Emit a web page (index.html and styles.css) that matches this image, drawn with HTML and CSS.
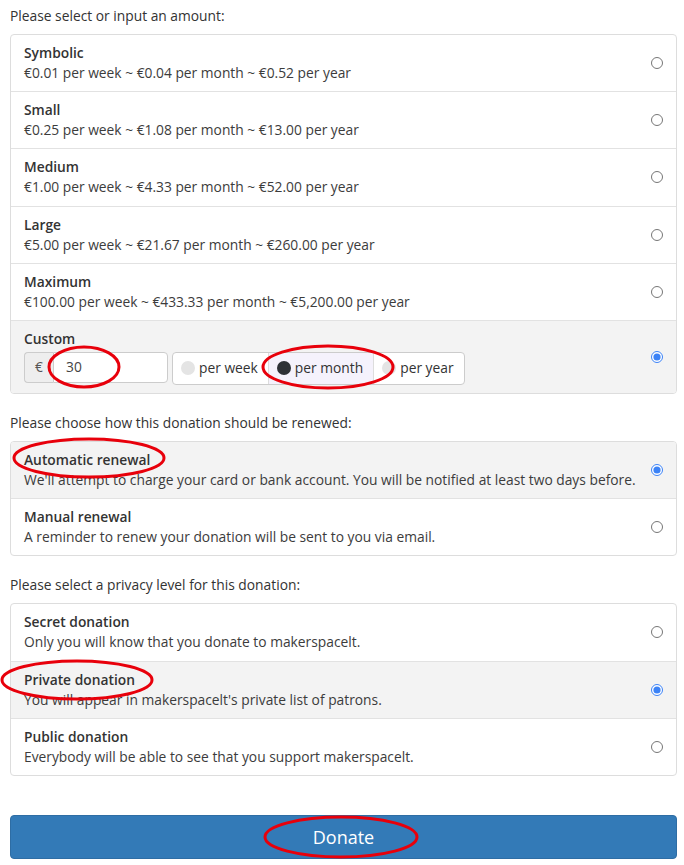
FILE: index.html
```html
<!DOCTYPE html>
<html>
<head>
<meta charset="utf-8">
<link rel="stylesheet" href="styles.css">
</head>
<body>
<div class="page">
  <p class="label first">Please select or input an amount:</p>
  <div class="group">
    <label class="item"><span class="text"><b>Symbolic</b><span>€0.01 per week ~ €0.04 per month ~ €0.52 per year</span></span><input type="radio" name="amount"></label>
    <label class="item"><span class="text"><b>Small</b><span>€0.25 per week ~ €1.08 per month ~ €13.00 per year</span></span><input type="radio" name="amount"></label>
    <label class="item"><span class="text"><b>Medium</b><span>€1.00 per week ~ €4.33 per month ~ €52.00 per year</span></span><input type="radio" name="amount"></label>
    <label class="item"><span class="text"><b>Large</b><span>€5.00 per week ~ €21.67 per month ~ €260.00 per year</span></span><input type="radio" name="amount"></label>
    <label class="item"><span class="text"><b>Maximum</b><span>€100.00 per week ~ €433.33 per month ~ €5,200.00 per year</span></span><input type="radio" name="amount"></label>
    <label class="item active custom"><span class="text"><b>Custom</b>
      <span class="controls">
        <span class="inputgroup"><span class="addon">€</span><span class="field">30</span></span>
        <span class="btngroup">
          <span class="btn"><i class="dot light"></i>per week</span>
          <span class="btn on"><i class="dot dark"></i>per month</span>
          <span class="btn"><i class="dot light"></i>per year</span>
        </span>
      </span></span><input type="radio" name="amount" checked></label>
  </div>

  <p class="label">Please choose how this donation should be renewed:</p>
  <div class="group">
    <label class="item active"><span class="text"><b>Automatic renewal</b><span>We'll attempt to charge your card or bank account. You will be notified at least two days before.</span></span><input type="radio" name="renew" checked></label>
    <label class="item"><span class="text"><b>Manual renewal</b><span>A reminder to renew your donation will be sent to you via email.</span></span><input type="radio" name="renew"></label>
  </div>

  <p class="label">Please select a privacy level for this donation:</p>
  <div class="group">
    <label class="item"><span class="text"><b>Secret donation</b><span>Only you will know that you donate to makerspacelt.</span></span><input type="radio" name="priv"></label>
    <label class="item active"><span class="text"><b>Private donation</b><span>You will appear in makerspacelt's private list of patrons.</span></span><input type="radio" name="priv" checked></label>
    <label class="item"><span class="text"><b>Public donation</b><span>Everybody will be able to see that you support makerspacelt.</span></span><input type="radio" name="priv"></label>
  </div>

  <button class="donate">Donate</button>
</div>

<svg class="marks" width="684" height="865" viewBox="0 0 684 865">
  <g fill="none" stroke="#e8000b" stroke-width="3">
    <ellipse cx="84" cy="367" rx="35" ry="20"/>
    <ellipse cx="328" cy="367" rx="65" ry="21"/>
    <ellipse cx="89" cy="458" rx="75" ry="19"/>
    <ellipse cx="77" cy="680" rx="75" ry="19"/>
    <ellipse cx="341" cy="837" rx="76" ry="20"/>
  </g>
</svg>
</body>
</html>
```
FILE: styles.css
```css
html, body {
  margin: 0;
  padding: 0;
  background: #fff;
}
body {
  font-family: "Open Sans", "Noto Sans", sans-serif;
  font-size: 13.8px;
  color: #333;
  position: relative;
}
.page {
  padding: 6px 7px 0 10px;
}
.label {
  margin: 19px 0 8px;
  line-height: 20px;
  color: #333;
}
.label.first {
  margin-top: 0;
}
.group {
  border: 1px solid #ddd;
  border-radius: 4px;
  overflow: hidden;
}
.item {
  display: flex;
  align-items: center;
  padding: 8px 13px 8.2px 13px;
  border-top: 1px solid #e2e2e2;
  line-height: 20px;
}
.item:first-child {
  border-top: 0;
}
.item.active {
  background: #f3f3f3;
}
.text {
  flex: 1;
  display: flex;
  flex-direction: column;
}
.text b {
  font-weight: 600;
  color: #333;
}
.text > span {
  color: #3c3c3c;
}
.item input {
  margin: 0;
  width: 12px;
  height: 12px;
  accent-color: #3b82f6;
}
.item.custom {
  padding-bottom: 8px;
}
.controls {
  display: flex;
  gap: 4px;
  margin-top: 3px;
}
.inputgroup {
  display: flex;
  height: 31px;
}
.addon {
  width: 28px;
  background: #eee;
  border: 1px solid #ccc;
  border-right: 0;
  border-radius: 4px 0 0 4px;
  display: flex;
  align-items: center;
  justify-content: center;
  color: #555;
}
.field {
  width: 101px;
  background: #fff;
  border: 1px solid #ccc;
  border-radius: 0 4px 4px 0;
  padding-left: 12px;
  display: flex;
  align-items: center;
  color: #444;
}
.btngroup {
  display: flex;
  height: 31px;
  border: 1px solid #ccc;
  border-radius: 4px;
  background: #fff;
  overflow: hidden;
}
.btn {
  display: flex;
  align-items: center;
  gap: 4px;
  padding: 0 10px 0 8px;
  border-left: 1px solid #ddd;
  color: #333;
}
.btn:first-child {
  border-left: 0;
}
.btn.on {
  background: #f5f2fc;
}
.dot {
  display: inline-block;
  width: 14px;
  height: 14px;
  border-radius: 50%;
}
.dot.light {
  background: #e4e4e4;
}
.dot.dark {
  background: #2e3136;
}
.donate {
  display: block;
  width: 100%;
  margin-top: 39px;
  height: 44px;
  background: #337ab7;
  border: 1px solid #2e6da4;
  border-radius: 4px;
  color: #fff;
  font-family: inherit;
  font-size: 18px;
}
.marks {
  position: absolute;
  left: 0;
  top: 0;
  pointer-events: none;
}
```
